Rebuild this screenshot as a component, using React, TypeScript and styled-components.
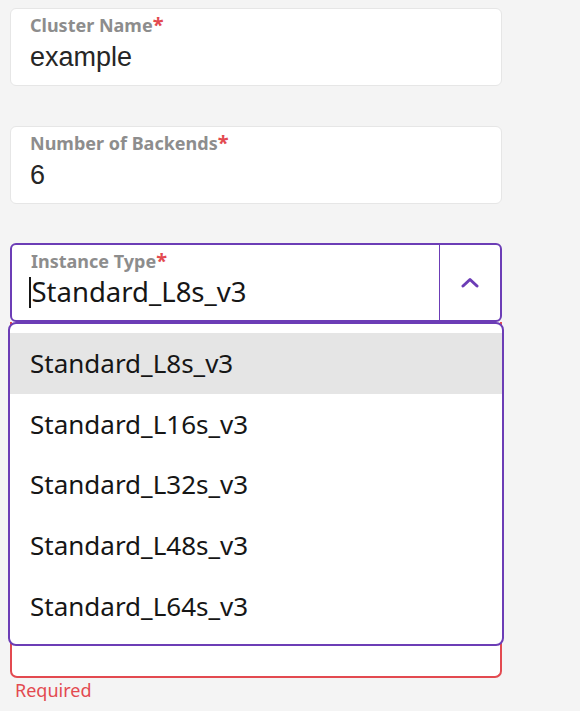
import styled, { createGlobalStyle } from 'styled-components';

const purple = '#6c3db6';
const red = '#e34a50';

const GlobalStyle = createGlobalStyle`
  body {
    margin: 0;
    background: #f4f4f4;
    font-family: "Noto Sans", "Liberation Sans", sans-serif;
  }
`;

const Page = styled.div`
  display: flex;
  flex-direction: column;
  width: 492px;
  padding: 8px 0 0 10px;
`;

const Field = styled.div<{ $focused?: boolean }>`
  box-sizing: border-box;
  display: flex;
  height: ${p => (p.$focused ? 79 : 78)}px;
  margin-bottom: ${p => (p.$focused ? 0 : 40)}px;
  background: #fff;
  border: ${p => (p.$focused ? `2px solid ${purple}` : '1px solid #e6e6e6')};
  border-radius: 6px;
`;

const FieldBody = styled.div`
  flex: 1;
  display: flex;
  flex-direction: column;
  padding: 5px 19px 0;
`;

const Label = styled.div`
  font-family: "Noto Sans", sans-serif;
  font-weight: 700;
  font-size: 18px;
  line-height: 22px;
  color: #8d8d8d;
`;

const Star = styled.span`
  color: ${red};
  font-size: 20px;
`;

const Value = styled.div`
  margin-top: 5px;
  font-family: "Liberation Sans", Arial, sans-serif;
  font-size: 27px;
  line-height: 32px;
  color: #262626;
`;

const SelectValue = styled.div`
  display: flex;
  align-items: center;
  margin-top: 3px;
  margin-left: -2px;
  font-family: "Noto Sans", sans-serif;
  font-size: 27.5px;
  line-height: 34px;
  color: #161616;
`;

const Caret = styled.span`
  width: 1.5px;
  height: 31px;
  background: #161616;
  margin-right: 1px;
`;

const Toggle = styled.div`
  width: 60px;
  display: flex;
  align-items: center;
  justify-content: center;
  border-left: 1.5px solid ${purple};
`;

const SelectBlock = styled.div`
  margin-top: -1px;
`;

const SelectGroup = styled.div`
  position: relative;
  display: flex;
  flex-direction: column;
`;

const ErrorBox = styled.div`
  box-sizing: border-box;
  height: 356px;
  border: 2px solid ${red};
  border-top: none;
  border-radius: 0 0 7px 7px;
  background: #fff;
`;

const ErrorText = styled.div`
  margin: 1px 0 0 5px;
  font-size: 18px;
  line-height: 22px;
  color: ${red};
`;

const Menu = styled.div`
  position: absolute;
  top: 79px;
  left: -2px;
  width: 496px;
  box-sizing: border-box;
  padding: 9px 0 8px;
  background: #fff;
  border: 2px solid ${purple};
  border-radius: 8px;
`;

const Option = styled.div<{ $active?: boolean }>`
  height: 60.6px;
  display: flex;
  align-items: center;
  padding-left: 20px;
  font-size: 26px;
  color: #161616;
  background: ${p => (p.$active ? '#e5e5e5' : 'transparent')};
`;

const options = ['Standard_L8s_v3', 'Standard_L16s_v3', 'Standard_L32s_v3', 'Standard_L48s_v3', 'Standard_L64s_v3'];

export default function App() {
  return (
    <>
      <GlobalStyle />
      <Page>
        <Field>
          <FieldBody>
            <Label>Cluster Name<Star>*</Star></Label>
            <Value>example</Value>
          </FieldBody>
        </Field>

        <Field>
          <FieldBody>
            <Label>Number of Backends<Star>*</Star></Label>
            <Value>6</Value>
          </FieldBody>
        </Field>

        <SelectBlock>
          <SelectGroup>
            <Field $focused>
              <FieldBody>
                <Label>Instance Type<Star>*</Star></Label>
                <SelectValue><Caret />Standard_L8s_v3</SelectValue>
              </FieldBody>
              <Toggle>
                <svg width="18" height="11" viewBox="0 0 18 11" fill="none">
                  <path d="M2 9 L9 2.5 L16 9" stroke={purple} strokeWidth="3" strokeLinecap="round" strokeLinejoin="round" />
                </svg>
              </Toggle>
            </Field>
            <ErrorBox />
            <Menu>
              {options.map((o, i) => (
                <Option key={o} $active={i === 0}>{o}</Option>
              ))}
            </Menu>
          </SelectGroup>
          <ErrorText>Required</ErrorText>
        </SelectBlock>
      </Page>
    </>
  );
}
